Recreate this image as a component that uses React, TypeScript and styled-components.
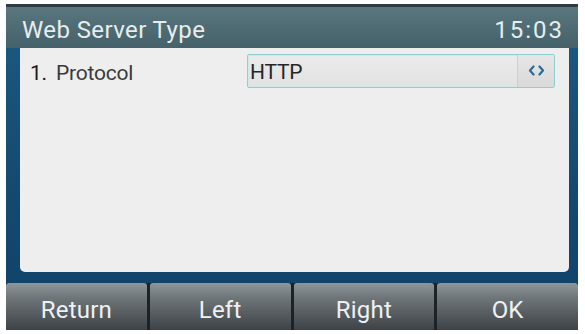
import React from "react";
import styled, { createGlobalStyle } from "styled-components";

const Global = createGlobalStyle`
  html, body { margin: 0; padding: 0; background: #ffffff; }
  body { font-family: Roboto, "Noto Sans", "Liberation Sans", sans-serif; }
`;

const Screen = styled.div`
  width: 572px;
  height: 326px;
  margin: 4px 7px 4px 6px;
  display: flex;
  flex-direction: column;
  background: linear-gradient(180deg, #1d5a80 0%, #14496e 60%, #0f4168 100%);
  overflow: hidden;
`;

const TitleBar = styled.div`
  height: 44px;
  box-sizing: border-box;
  border-top: 3px solid #2e3c42;
  display: flex;
  align-items: center;
  justify-content: space-between;
  padding: 4px 14px 0 16px;
  background: linear-gradient(180deg, #5a767e 0%, #4e6a72 55%, #45616a 100%);
  color: #e6edef;
  font-size: 24px;
  letter-spacing: 0.4px;
`;

const Clock = styled.span`
  letter-spacing: 2px;
`;

const Body = styled.div`
  flex: 1;
  display: flex;
  padding: 0 9px 11px 14px;
`;

const Panel = styled.div`
  flex: 1;
  background: #eeeeee;
  border-radius: 0 0 5px 5px;
  padding: 5px 14px 0 10px;
`;

const Row = styled.div`
  display: flex;
  align-items: center;
  height: 35px;
`;

const Label = styled.div`
  width: 217px;
  font-size: 21px;
  letter-spacing: -0.2px;
  color: #3a3a3a;
  padding-top: 4px;
`;

const Num = styled.span`
  color: #1a1a1a;
  margin-right: 9px;
`;

const Field = styled.div`
  flex: 1;
  height: 34px;
  box-sizing: border-box;
  display: flex;
  border: 1px solid #8fcfd2;
  border-radius: 2px;
  background: linear-gradient(180deg, #ebebeb 0%, #e2e2e2 100%);
  box-shadow: inset 0 0 0 1px #cfe9ea;
`;

const Value = styled.div`
  flex: 1;
  display: flex;
  align-items: center;
  padding: 2px 0 0 2px;
  font-size: 21px;
  letter-spacing: -0.2px;
  color: #262626;
`;

const Arrows = styled.div`
  width: 36px;
  display: flex;
  align-items: center;
  justify-content: center;
  border-left: 1px solid #cfcfcf;
  background: linear-gradient(180deg, #e6e6e6 0%, #d9d9d9 100%);
`;

const SoftKeys = styled.div`
  height: 47px;
  display: flex;
  gap: 3px;
  background: #1b2328;
`;

const Key = styled.div`
  flex: 1;
  display: flex;
  align-items: center;
  justify-content: center;
  border-radius: 3px 3px 0 0;
  background: linear-gradient(180deg, #8f979b 0%, #70777b 30%, #565c60 65%, #3d4246 100%);
  color: #eef1f2;
  font-size: 24px;
  letter-spacing: 0.2px;
  padding-top: 7px;
`;

export default function App() {
  return (
    <>
      <Global />
      <Screen>
        <TitleBar>
          <span>Web Server Type</span>
          <Clock>15:03</Clock>
        </TitleBar>
        <Body>
          <Panel>
            <Row>
              <Label>
                <Num>1.</Num>Protocol
              </Label>
              <Field>
                <Value>HTTP</Value>
                <Arrows>
                  <svg width="17" height="11" viewBox="0 0 17 11">
                    <path d="M5.5 1.5 L2 5.5 L5.5 9.5" fill="none" stroke="#2b6c92" strokeWidth="2.2" strokeLinecap="round" strokeLinejoin="round" />
                    <path d="M11.5 1.5 L15 5.5 L11.5 9.5" fill="none" stroke="#2b6c92" strokeWidth="2.2" strokeLinecap="round" strokeLinejoin="round" />
                  </svg>
                </Arrows>
              </Field>
            </Row>
          </Panel>
        </Body>
        <SoftKeys>
          <Key>Return</Key>
          <Key>Left</Key>
          <Key>Right</Key>
          <Key>OK</Key>
        </SoftKeys>
      </Screen>
    </>
  );
}
